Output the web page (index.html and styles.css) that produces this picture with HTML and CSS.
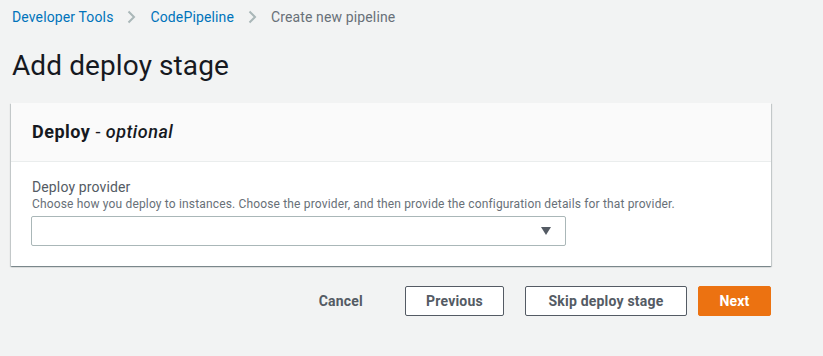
FILE: index.html
```html
<!DOCTYPE html>
<html lang="en">
<head>
  <meta charset="UTF-8" />
  <meta name="viewport" content="width=device-width, initial-scale=1.0"/>
  <title>Add deploy stage</title>
  <link rel="stylesheet" href="styles.css">
</head>
<body>
  <div class="page">
    <!-- Breadcrumb -->
    <nav class="breadcrumb">
      <a href="#">Developer Tools</a>
      <span class="sep">
        <svg width="9" height="14" viewBox="0 0 9 14"><path d="M1.5 1.5 L7 7 L1.5 12.5" fill="none" stroke="#aab7b8" stroke-width="2"/></svg>
      </span>
      <a href="#">CodePipeline</a>
      <span class="sep">
        <svg width="9" height="14" viewBox="0 0 9 14"><path d="M1.5 1.5 L7 7 L1.5 12.5" fill="none" stroke="#aab7b8" stroke-width="2"/></svg>
      </span>
      <span class="current">Create new pipeline</span>
    </nav>

    <h1 class="title">Add deploy stage</h1>

    <!-- Card -->
    <div class="card">
      <div class="card-header">
        <h2>Deploy <span class="opt">- <em>optional</em></span></h2>
      </div>
      <div class="card-body">
        <label class="field-label">Deploy provider</label>
        <p class="field-desc">Choose how you deploy to instances. Choose the provider, and then provide the configuration details for that provider.</p>
        <div class="select">
          <span class="caret"></span>
        </div>
      </div>
    </div>

    <!-- Actions -->
    <div class="actions">
      <button class="btn btn-link">Cancel</button>
      <button class="btn btn-prev">Previous</button>
      <button class="btn btn-skip">Skip deploy stage</button>
      <button class="btn btn-primary">Next</button>
    </div>
  </div>
</body>
</html>
```

FILE: styles.css
```css
body {
  font-family: Roboto, Arial, sans-serif;
  margin: 0;
  background: #f2f3f3;
  color: #16191f;
}
.page {
  width: 760px;
  margin-left: 11px;
}
.breadcrumb {
  display: flex;
  align-items: center;
  padding: 7px 0 0 1px;
  font-size: 14px;
  line-height: 20px;
  letter-spacing: 0.13px;
}
.breadcrumb a {
  color: #0073bb;
  text-decoration: none;
}
.breadcrumb .sep {
  display: flex;
  margin: 0 14px 0 14px;
}
.breadcrumb .current {
  color: #687078;
}
.title {
  margin: 21px 0 19px 1px;
  font-size: 28px;
  line-height: 36px;
  font-weight: 400;
  letter-spacing: 0.1px;
}
.card {
  background: #fff;
  box-shadow: 0 1px 1px 0 rgba(0, 28, 36, 0.3), 1px 1px 1px 0 rgba(0, 28, 36, 0.15), -1px 1px 1px 0 rgba(0, 28, 36, 0.15);
}
.card-header {
  background: #fafafa;
  border-bottom: 1px solid #eaeded;
  padding: 18px 21px;
}
.card-header h2 {
  margin: 0;
  font-size: 18px;
  line-height: 22px;
  font-weight: 700;
  letter-spacing: 0.5px;
}
.card-header .opt {
  font-weight: 400;
}
.card-header em {
  font-weight: 500;
}
.card-body {
  padding: 16px 20px 20px 20px;
}
.field-label {
  display: block;
  padding-left: 1px;
  font-size: 14px;
  line-height: 18px;
  color: #545b64;
  letter-spacing: 0.13px;
}
.field-desc {
  margin: 0 0 4px;
  padding-left: 1px;
  font-size: 12px;
  line-height: 16px;
  color: #687078;
  letter-spacing: 0.16px;
}
.select {
  position: relative;
  width: 533px;
  height: 28px;
  border: 1px solid #aab7b8;
  border-radius: 2px;
  background: #fff;
}
.caret {
  position: absolute;
  right: 14px;
  top: 10px;
  width: 0;
  height: 0;
  border-left: 5.5px solid transparent;
  border-right: 5.5px solid transparent;
  border-top: 8px solid #545b64;
}
.actions {
  display: flex;
  justify-content: flex-end;
  align-items: center;
  margin-top: 20px;
}
.btn {
  font-family: inherit;
  font-size: 14px;
  font-weight: 700;
  height: 30px;
  padding: 0;
  border: 1px solid #545b64;
  border-radius: 2px;
  background: #fff;
  color: #545b64;
  letter-spacing: 0.2px;
  white-space: nowrap;
  cursor: pointer;
}
.btn-link {
  border-color: transparent;
  background: transparent;
  padding: 0 20px;
  margin-right: 21px;
}
.btn-prev {
  width: 99px;
  margin-right: 21px;
}
.btn-skip {
  width: 162px;
  margin-right: 11px;
}
.btn-primary {
  width: 73px;
  background: #ec7211;
  border-color: #ec7211;
  color: #fff;
}
```
